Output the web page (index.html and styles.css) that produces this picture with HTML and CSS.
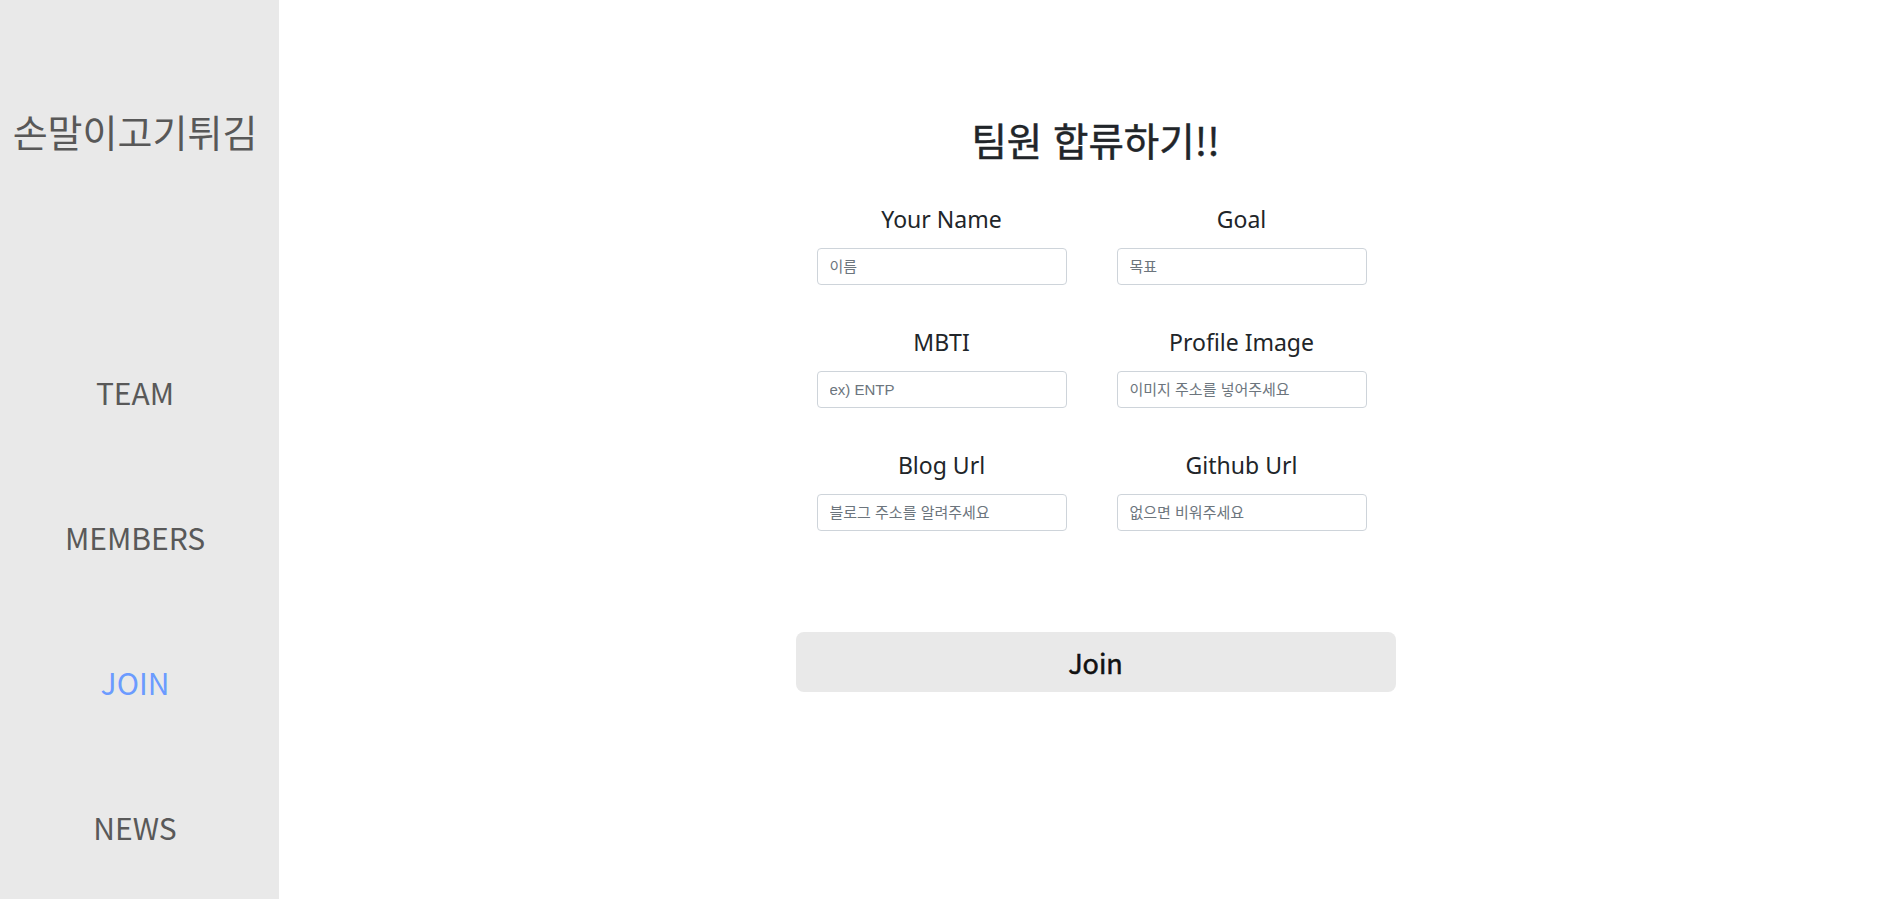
FILE: index.html
```html
<!DOCTYPE html>
<html lang="ko">
<head>
<meta charset="utf-8">
<title>팀원 합류하기</title>
<link rel="stylesheet" href="styles.css">
</head>
<body>
<div class="layout">
  <aside class="sidebar">
    <div class="logo">손말이고기튀김</div>
    <nav class="nav">
      <a class="nav-item" href="#">TEAM</a>
      <a class="nav-item" href="#">MEMBERS</a>
      <a class="nav-item active" href="#">JOIN</a>
      <a class="nav-item" href="#">NEWS</a>
    </nav>
  </aside>
  <main class="main">
    <h1 class="title">팀원 합류하기!!</h1>
    <form class="form">
      <div class="grid">
        <div class="field">
          <label class="label">Your Name</label>
          <input class="input" type="text" placeholder="이름">
        </div>
        <div class="field">
          <label class="label">Goal</label>
          <input class="input" type="text" placeholder="목표">
        </div>
        <div class="field">
          <label class="label">MBTI</label>
          <input class="input" type="text" placeholder="ex) ENTP">
        </div>
        <div class="field">
          <label class="label">Profile Image</label>
          <input class="input" type="text" placeholder="이미지 주소를 넣어주세요">
        </div>
        <div class="field">
          <label class="label">Blog Url</label>
          <input class="input" type="text" placeholder="블로그 주소를 알려주세요">
        </div>
        <div class="field">
          <label class="label">Github Url</label>
          <input class="input" type="text" placeholder="없으면 비워주세요">
        </div>
      </div>
      <button class="btn" type="button">Join</button>
    </form>
  </main>
</div>
</body>
</html>
```

FILE: styles.css
```css
* { box-sizing: border-box; }
html, body { margin: 0; padding: 0; height: 100%; }
body {
  font-family: "Noto Sans CJK KR", "Noto Sans", sans-serif;
  background: #ffffff;
  color: #212529;
  overflow: hidden;
}
.layout {
  display: flex;
  height: 899px;
}
.sidebar {
  width: 279px;
  flex: 0 0 279px;
  background: #e9e9e9;
  display: flex;
  flex-direction: column;
  padding-right: 9px;
}
.logo {
  height: 274px;
  display: flex;
  align-items: center;
  justify-content: center;
  font-size: 38px;
  color: #585858;
  white-space: nowrap;
}
.nav {
  margin-top: 58px;
  display: flex;
  flex-direction: column;
}
.nav-item {
  height: 145px;
  display: flex;
  align-items: center;
  justify-content: center;
  font-size: 30px;
  color: #595959;
  text-decoration: none;
}
.nav-item.active { color: #6b9bff; }
.main {
  flex: 1;
  display: flex;
  flex-direction: column;
  align-items: center;
  padding-left: 30px;
  padding-top: 116px;
}
.title {
  margin: 0;
  font-size: 38.5px;
  font-weight: 400;
  line-height: 1.2;
  color: #212529;
  -webkit-text-stroke: 0.5px #212529;
}
.form {
  margin-top: 37px;
  display: flex;
  flex-direction: column;
  align-items: center;
}
.grid {
  display: grid;
  grid-template-columns: 250px 250px;
  column-gap: 50px;
  row-gap: 37px;
  margin-right: 8px;
}
.field {
  display: flex;
  flex-direction: column;
  align-items: center;
  gap: 9px;
}
.label {
  font-family: "Noto Sans", "Noto Sans CJK KR", sans-serif;
  font-size: 23px;
  line-height: 40px;
  color: #212529;
}
.input {
  width: 250px;
  height: 37px;
  border: 1px solid #ced4da;
  border-radius: 4px;
  padding: 0 12px;
  font-family: "Liberation Sans", "Noto Sans CJK KR", sans-serif;
  font-size: 15px;
  color: #212529;
  outline: none;
}
.input::placeholder { color: #6c757d; }
.btn {
  margin-top: 101px;
  width: 600px;
  height: 60px;
  border: none;
  border-radius: 8px;
  background: #e9e9e9;
  font-family: "Noto Sans CJK KR", "Noto Sans", sans-serif;
  font-size: 27px;
  font-weight: 400;
  -webkit-text-stroke: 0.5px #111;
  color: #111;
}
```
